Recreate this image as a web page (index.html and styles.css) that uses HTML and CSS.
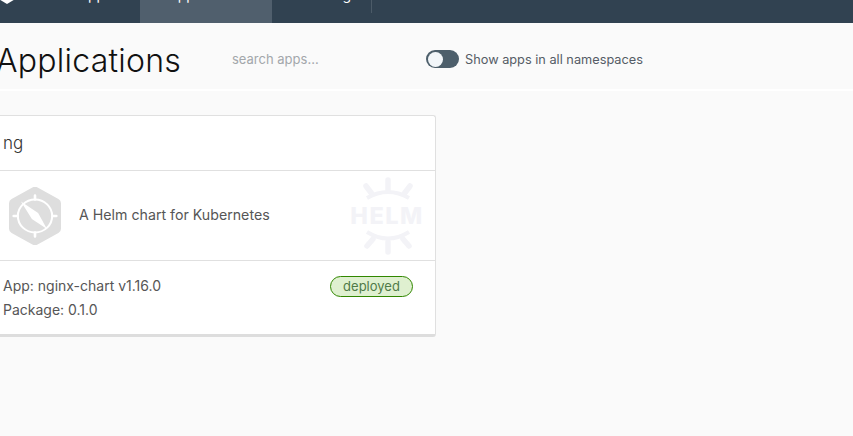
FILE: index.html
```html
<!DOCTYPE html>
<html lang="en">
<head>
    <meta charset="UTF-8">
    <meta name="viewport" content="width=device-width, initial-scale=1.0">
    <title>Applications</title>
    <link rel="stylesheet" href="styles.css">
</head>
<body>
    <header class="topnav">
        <div class="topnav-inner">
            <div class="brand">
                <svg class="brand-logo" width="16" height="18" viewBox="0 0 16 18"><path d="M8 0 15.5 4.5V13.5L8 18 .5 13.5V4.5Z" fill="#fff"/></svg>
                <span>Kubeapps</span>
            </div>
            <a class="tab tab-active">Applications</a>
            <a class="tab tab-catalog">Catalog</a>
            <span class="tab-sep"></span>
        </div>
    </header>
    <main class="content">
        <div class="page-head">
            <h1>Applications</h1>
            <input class="search" type="text" placeholder="search apps...">
            <label class="toggle-row">
                <span class="toggle"><span class="toggle-knob"></span></span>
                <span>Show apps in all namespaces</span>
            </label>
        </div>
        <section class="card">
            <div class="card-title">ng</div>
            <div class="card-body">
                <svg class="app-icon" width="52" height="58" viewBox="2 1 50 58" preserveAspectRatio="none">
                    <path d="M24.5 1.5a5 5 0 0 1 5 0L49.5 13a5 5 0 0 1 2.500 4.300V42.700a5 5 0 0 1-2.500 4.300L29.500 58.500a5 5 0 0 1-5 0L4.500 47a5 5 0 0 1-2.500-4.300V17.300A5 5 0 0 1 4.500 13Z" fill="#dedede"/>
                    <circle cx="27" cy="30" r="16.500" fill="none" stroke="#fff" stroke-width="2"/>
                    <path d="M27 9.500v4M27 46.500v4M6.500 30h4M43.500 30h4" stroke="#fff" stroke-width="2.500" stroke-linecap="round"/>
                    <path d="M13.500 15.500 30 27 38.500 43 24 33Z" fill="#fff"/>
                </svg>
                <p class="app-desc">A Helm chart for Kubernetes</p>
                <div class="helm-mark">
                    <svg width="70" height="27" viewBox="0 0 70 27"><path d="M15 21Q36 9 57 21" fill="none" stroke="#f3f3f7" stroke-width="4"/><path d="M36 3V13M14 9 20 17M58 9 52 17" fill="none" stroke="#f3f3f7" stroke-width="5.500" stroke-linecap="round"/></svg>
                    <span class="helm-word">HELM</span>
                    <svg width="70" height="27" viewBox="0 0 70 27"><path d="M15 4Q36 17 57 4" fill="none" stroke="#f3f3f7" stroke-width="4"/><path d="M36 14V24M15 18 21 11M57 18 51 11" fill="none" stroke="#f3f3f7" stroke-width="5.500" stroke-linecap="round"/></svg>
                </div>
            </div>
            <div class="card-foot">
                <div class="app-meta">
                    <div>App: nginx-chart v1.16.0</div>
                    <div>Package: 0.1.0</div>
                </div>
                <span class="status-badge">deployed</span>
            </div>
        </section>
    </main>
</body>
</html>
```

FILE: styles.css
```css
html, body {
    height: 100%;
}

body {
    margin: 0;
    overflow: hidden;
    background-color: #fafafa;
    font-family: Inter, "Open Sans", sans-serif;
    color: #444;
}

.topnav {
    height: 23px;
    overflow: hidden;
    background-color: #314251;
}

.topnav-inner {
    display: flex;
    align-items: flex-start;
    height: 46px;
    margin-top: -23px;
    font-size: 14px;
    color: #fff;
    line-height: 36px;
}

.brand {
    display: flex;
    align-items: center;
    gap: 31px;
    width: 141px;
    height: 36px;
    box-sizing: border-box;
    margin-left: -1px;
}

.tab {
    box-sizing: border-box;
    height: 46px;
    padding-left: 28px;
}

.tab-active {
    width: 132px;
    background-color: #505f6d;
}

.tab-catalog {
    width: 99px;
}

.tab-sep {
    width: 1px;
    height: 36px;
    background-color: #4c5b68;
}

.content {
    margin-left: -10px;
}

.page-head {
    display: flex;
    align-items: center;
    box-sizing: border-box;
    height: 68px;
    padding-top: 6px;
    border-bottom: 2px solid #fff;
}

.page-head h1 {
    width: 236px;
    margin: 2px 0 0 6px;
    font-size: 32px;
    font-weight: 300;
    letter-spacing: 0.25px;
    color: #111;
}

.search {
    width: 194px;
    padding: 0;
    border: 0;
    outline: 0;
    background: transparent;
    font: inherit;
    font-size: 13px;
}

.search::placeholder {
    color: #a3a7ab;
}

.toggle-row {
    display: flex;
    align-items: center;
    gap: 6px;
    font-size: 12.75px;
    color: #555c66;
}

.toggle {
    display: flex;
    align-items: center;
    box-sizing: border-box;
    width: 33px;
    height: 18px;
    padding: 2px;
    border-radius: 9px;
    background-color: #4d5f6b;
}

.toggle-knob {
    width: 15px;
    height: 15px;
    border-radius: 50%;
    background-color: #f2f6f9;
}

.card {
    box-sizing: border-box;
    width: 446px;
    margin-top: 24px;
    border: 1px solid #e0e0e0;
    border-bottom: 3px solid #ddd;
    border-radius: 3px;
    background-color: #fff;
}

.card-title {
    height: 54px;
    padding-left: 12px;
    border-bottom: 1px solid #e0e0e0;
    font-size: 17px;
    line-height: 54px;
    font-weight: 300;
    color: #333;
}

.card-body {
    display: flex;
    align-items: center;
    height: 89px;
    padding-left: 18px;
    border-bottom: 1px solid #e0e0e0;
}

.app-desc {
    margin: -2px 0 0 18px;
    font-size: 14.2px;
    color: #565656;
}

.helm-mark {
    display: flex;
    flex-direction: column;
    align-items: center;
    width: 70px;
    margin-left: auto;
    margin-right: 13px;
}

.helm-word {
    font-size: 23.5px;
    line-height: 24px;
    font-weight: 800;
    letter-spacing: 1.5px;
    color: #f3f3f7;
}

.card-foot {
    display: flex;
    justify-content: space-between;
    align-items: flex-start;
    height: 60px;
    padding: 13px 22px 0 12px;
}

.app-meta {
    font-size: 14px;
    line-height: 24px;
    color: #565656;
}

.status-badge {
    box-sizing: border-box;
    width: 83px;
    height: 21px;
    margin-top: 2px;
    border: 1px solid #318700;
    border-radius: 11px;
    background-color: #dff0d0;
    font-size: 13px;
    line-height: 19px;
    text-align: center;
    color: #4f7a48;
}
```
